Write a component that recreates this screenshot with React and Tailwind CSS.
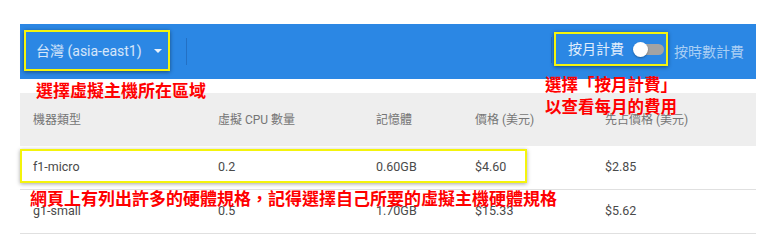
import React from "react";

const UI = { fontFamily: 'Roboto, "Noto Sans CJK TC", sans-serif' };
const RED = { fontFamily: '"Noto Sans CJK TC", "Noto Sans", sans-serif' };

const cols = "grid grid-cols-[185px_158px_99px_130px_1fr] pl-[13px] items-center";

function Row({ cells, last }) {
  return (
    <div className={`${cols} h-[44px] border-b border-[#e0e0e0] text-[12.5px] text-[#4a4a4a]`}>
      {cells.map((c, i) => (
        <div key={i}>{c}</div>
      ))}
    </div>
  );
}

export default function App() {
  return (
    <div className="relative w-[768px] h-[244px] bg-white overflow-hidden" style={UI}>
      <div className="ml-[20px] pt-[24px] w-[736px]">
        {/* Blue toolbar */}
        <div className="h-[55px] bg-[#2b87e4] flex">
          <div className="self-start mt-[6px] ml-[4px] w-[146px] h-[41px] border-2 border-[#f4f40c] shadow-[0_1px_4px_rgba(0,0,0,0.45)] flex items-center pl-[10px] pr-[6px] justify-between">
            <span className="text-[14px] text-white/80 leading-none">台灣 (asia-east1)</span>
            <span className="w-0 h-0 border-l-[4px] border-r-[4px] border-t-[4px] border-l-transparent border-r-transparent border-t-white/90" />
          </div>
          <div className="self-start mt-[14px] ml-[16px] w-px h-[27px] bg-[#2370c4]" />
          <div className="flex-1" />
          <div className="self-start mt-[13px] w-px h-[26px] bg-[#2370c4]" />
          <div className="self-start mt-[8px] ml-[2px] w-[114px] h-[34px] border-2 border-[#f4f40c] shadow-[0_1px_4px_rgba(0,0,0,0.45)] flex items-center pl-[12px]">
            <span className="text-[14px] text-white/85 leading-none">按月計費</span>
            <div className="relative ml-[9px] w-[31px] h-[15px]">
              <div className="absolute left-[7px] top-[2px] w-[24px] h-[11px] rounded-full bg-[#a3a3a3]" />
              <div className="absolute left-0 top-0 w-[15px] h-[15px] rounded-full bg-white shadow-[0_1px_2px_rgba(0,0,0,0.3)]" />
            </div>
          </div>
          <span className="self-center ml-[6px] mr-[12px] text-[14px] text-white/60 leading-none">按時數計費</span>
        </div>

        <div className="h-[14px]" />

        {/* Header */}
        <div className={`${cols} h-[53px] bg-[#eeeeee] text-[12px] text-[#757575]`}>
          <div>機器類型</div>
          <div>虛擬 CPU 數量</div>
          <div>記憶體</div>
          <div>價格 (美元)</div>
          <div>先占價格 (美元)</div>
        </div>

        <Row cells={["f1-micro", "0.2", "0.60GB", "$4.60", "$2.85"]} />
        <Row cells={["g1-small", "0.5", "1.70GB", "$15.33", "$5.62"]} />
      </div>

      {/* highlight box over first row */}
      <div className="absolute left-[20px] top-[149px] w-[507px] h-[34px] border-2 border-[#f4f40c] shadow-[0_1px_4px_rgba(0,0,0,0.35)]" />

      {/* annotations */}
      <div className="absolute left-[36px] top-[81px] text-[17px] leading-none font-bold text-[#ff0000] whitespace-nowrap" style={RED}>
        選擇虛擬主機所在區域
      </div>
      <div className="absolute left-[545px] top-[73px] text-[16.5px] leading-[22px] font-bold text-[#ff0000] whitespace-nowrap" style={RED}>
        <div>選擇「按月計費」</div>
        <div>以查看每月的費用</div>
      </div>
      <div className="absolute left-[30px] top-[189px] text-[17px] leading-none font-bold text-[#ff0000] whitespace-nowrap" style={RED}>
        網頁上有列出許多的硬體規格，記得選擇自己所要的虛擬主機硬體規格
      </div>
    </div>
  );
}
